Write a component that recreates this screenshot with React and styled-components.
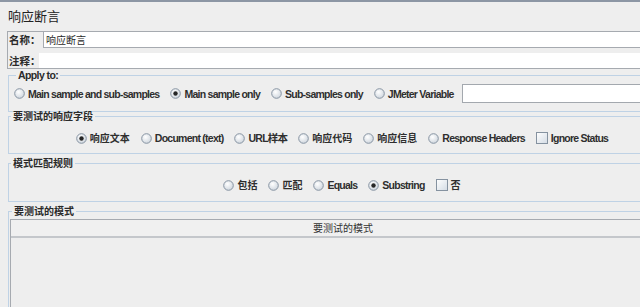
import React from 'react';
import styled, { createGlobalStyle } from 'styled-components';

const FONT = `"Liberation Sans", Arial, "Noto Sans CJK SC", sans-serif`;
const CJK = `"Noto Sans CJK SC", "Liberation Sans", sans-serif`;

const Global = createGlobalStyle`
  html, body { margin: 0; padding: 0; background: #eeeeee; overflow: hidden; }
  body { width: 640px; height: 307px; }
  #root { width: 676px; }
  * { box-sizing: border-box; }
`;

const Page = styled.div`
  width: 676px;
  height: 307px;
  border-top: 2px solid #8c96a4;
  background: #eeeeee;
  color: #2a2a2a;
`;

const Title = styled.div`
  height: 29px;
  padding: 6px 0 0 8px;
  font: 13px/15px ${CJK};
  color: #222;
`;

const NameBox = styled.div`
  margin-left: 7px;
  border-top: 1px solid #a6aab0;
  border-left: 1px solid #a6aab0;
  border-bottom: 1px solid #a6aab0;
`;

const FieldRow = styled.div`
  display: flex;
  height: ${(p) => p.$h}px;
  margin-top: ${(p) => p.$mt || 0}px;
`;

const FieldLabel = styled.div`
  width: ${(p) => p.$w}px;
  padding-left: 1px;
  font: bold 10.5px/16px ${CJK};
  white-space: nowrap;
`;

const TextInput = styled.div`
  flex: 1;
  background: #ffffff;
  border-left: ${(p) => (p.$framed ? '1px solid #a6aab0' : 'none')};
  border-bottom: ${(p) => (p.$framed ? '1px solid #a6aab0' : 'none')};
  padding-left: 2px;
  font: 10px/15px ${CJK};
`;

const Section = styled.fieldset`
  margin: ${(p) => p.$mt}px 0 0 8px;
  padding: ${(p) => p.$pad};
  border: 1px solid #bfd2e5;
  min-width: 0;
`;

const Legend = styled.legend`
  margin-left: 2px;
  padding: 0 2px;
  font: bold ${(p) => (p.$cjk ? '10px' : '10.5px')}/12px ${(p) => (p.$cjk ? CJK : FONT)};
  letter-spacing: ${(p) => (p.$cjk ? 0 : -0.6)}px;
  color: #2a2a2a;
`;

const OptionRow = styled.div`
  display: flex;
  align-items: center;
  justify-content: ${(p) => (p.$center ? 'center' : 'flex-start')};
  gap: 11px;
  height: ${(p) => p.$h}px;
`;

const Option = styled.label`
  display: flex;
  align-items: center;
  gap: 3px;
  white-space: nowrap;
  font: bold ${(p) => (p.$cjk ? '10px' : '10.5px')}/14px ${(p) => (p.$cjk ? CJK : FONT)};
  letter-spacing: ${(p) => (p.$cjk ? 0 : -0.75)}px;
  color: #2e2e2e;
`;

const VarInput = styled.div`
  flex: 1;
  height: 19px;
  margin-left: -3px;
  background: #ffffff;
  border: 1px solid #a3a8ae;
`;

const Table = styled.div`
  height: 120px;
  border-left: 1px solid #a6aab0;
  border-top: 1px solid #a6aab0;
`;

const TableHeader = styled.div`
  height: 18px;
  border-bottom: 2px solid #c4c7cb;
  background: #f0f0f0;
  text-align: center;
  font: 10px/16px ${CJK};
  color: #333;
`;

const Radio = ({ checked }) => (
  <svg width="11" height="11" viewBox="0 0 11 11">
    <defs>
      <radialGradient id="rgrad" cx="40%" cy="35%" r="75%">
        <stop offset="0" stopColor="#ffffff" />
        <stop offset="1" stopColor="#c9d1da" />
      </radialGradient>
    </defs>
    <circle cx="5.5" cy="5.5" r="4.8" fill="url(#rgrad)" stroke="#8794a2" strokeWidth="1" />
    {checked && <circle cx="5.5" cy="5.5" r="2.2" fill="#262626" />}
  </svg>
);

const Check = () => (
  <svg width="12" height="12" viewBox="0 0 12 12">
    <defs>
      <linearGradient id="cgrad" x1="0" y1="0" x2="1" y2="1">
        <stop offset="0" stopColor="#ffffff" />
        <stop offset="1" stopColor="#d3dbe4" />
      </linearGradient>
    </defs>
    <rect x="0.5" y="0.5" width="11" height="11" fill="url(#cgrad)" stroke="#8592a0" />
  </svg>
);

const RadioOption = ({ label, checked, cjk }) => (
  <Option $cjk={cjk}>
    <Radio checked={checked} />
    <span>{label}</span>
  </Option>
);

const CheckOption = ({ label, cjk }) => (
  <Option $cjk={cjk}>
    <Check />
    <span>{label}</span>
  </Option>
);

export default function App() {
  return (
    <>
      <Global />
      <Page>
        <Title>响应断言</Title>
        <NameBox>
          <FieldRow $h={16}>
            <FieldLabel $w={35}>名称：</FieldLabel>
            <TextInput $framed>响应断言</TextInput>
          </FieldRow>
          <FieldRow $h={15} $mt={5}>
            <FieldLabel $w={31}>注释：</FieldLabel>
            <TextInput />
          </FieldRow>
        </NameBox>

        <Section $mt={0} $pad="3px 0 8px 5px">
          <Legend>Apply to:</Legend>
          <OptionRow $h={19}>
            <RadioOption label="Main sample and sub-samples" />
            <RadioOption label="Main sample only" checked />
            <RadioOption label="Sub-samples only" />
            <RadioOption label="JMeter Variable" />
            <VarInput />
          </OptionRow>
        </Section>

        <Section $mt={-2} $pad="6px 0 5px 0">
          <Legend $cjk>要测试的响应字段</Legend>
          <OptionRow $h={20} $center>
            <RadioOption label="响应文本" checked cjk />
            <RadioOption label="Document (text)" />
            <RadioOption label="URL样本" />
            <RadioOption label="响应代码" cjk />
            <RadioOption label="响应信息" cjk />
            <RadioOption label="Response Headers" />
            <CheckOption label="Ignore Status" />
          </OptionRow>
        </Section>

        <Section $mt={3} $pad="6px 0 6px 0">
          <Legend $cjk>模式匹配规则</Legend>
          <OptionRow $h={20} $center>
            <RadioOption label="包括" cjk />
            <RadioOption label="匹配" cjk />
            <RadioOption label="Equals" />
            <RadioOption label="Substring" checked />
            <CheckOption label="否" cjk />
          </OptionRow>
        </Section>

        <Section $mt={3} $pad="2px 0 0 1px">
          <Legend $cjk>要测试的模式</Legend>
          <Table>
            <TableHeader>要测试的模式</TableHeader>
          </Table>
        </Section>
      </Page>
    </>
  );
}
